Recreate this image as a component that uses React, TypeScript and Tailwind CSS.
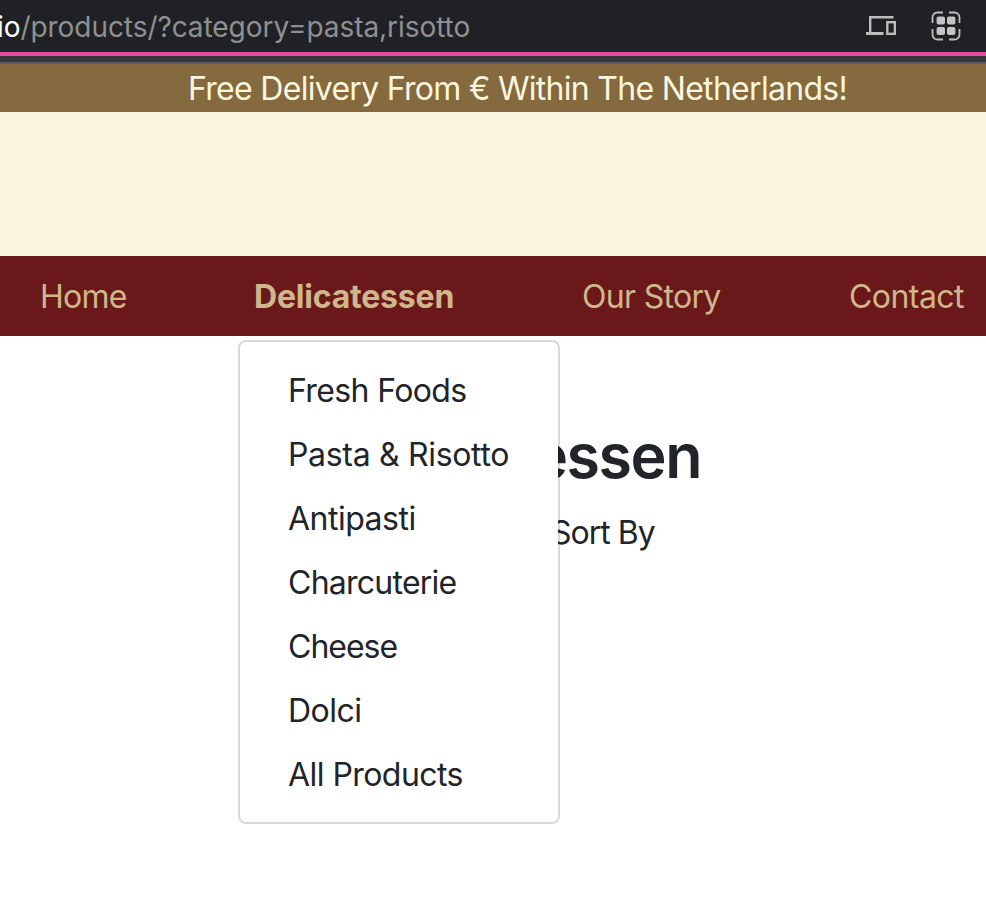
const menuItems = [
  { label: "Fresh Foods", tracking: "tracking-[-0.62px]" },
  { label: "Pasta & Risotto", tracking: "tracking-[-0.32px]" },
  { label: "Antipasti", tracking: "tracking-[-0.5px]" },
  { label: "Charcuterie", tracking: "tracking-[-0.75px]" },
  { label: "Cheese", tracking: "tracking-[-1px]" },
  { label: "Dolci", tracking: "tracking-[-0.5px]" },
  { label: "All Products", tracking: "tracking-[-0.55px]" },
];

function DevicesIcon() {
  return (
    <svg width="30" height="20" viewBox="0 0 30 20" fill="none" stroke="#bdbdbd" strokeWidth="2.4">
      <path d="M27.5 1.2H4.2V16" />
      <path d="M0 17.5H17.5" strokeWidth="3" />
      <rect x="21.3" y="6.2" width="7.6" height="11.6" />
    </svg>
  );
}

function GridIcon() {
  return (
    <svg width="30" height="30" viewBox="0 0 30 30" fill="none">
      <path
        d="M1.5 12V6.5a5 5 0 0 1 5-5H12M18 1.5h5.500a5 5 0 0 1 5 5V12M28.500 18v5.500a5 5 0 0 1-5 5H18M12 28.500H6.500a5 5 0 0 1-5-5V18"
        stroke="#bdbdbd"
        strokeWidth="1.8"
      />
      <g fill="#c4c4c4">
        <rect x="5.6" y="5.6" width="8.4" height="8" rx="2" />
        <rect x="16" y="5.6" width="8.4" height="8" rx="2" />
        <rect x="5.6" y="16" width="8.4" height="8" rx="2" />
        <rect x="16" y="16" width="8.4" height="8" rx="2" />
      </g>
    </svg>
  );
}

export default function App() {
  return (
    <div className="flex h-[920px] w-[986px] flex-col overflow-hidden bg-white font-['Inter','Liberation_Sans',sans-serif] text-[32px] leading-[48px] whitespace-nowrap text-[#212529]">
      <div className="flex h-[52px] shrink-0 items-center bg-[#202124]">
        <div className="-ml-[3px] w-[869px] pt-px text-[28px] tracking-[-0.06px] text-[#8f9092]">
          <span className="text-white">io</span>/products/?category=pasta,risotto
        </div>
        <DevicesIcon />
        <div className="ml-[35px]">
          <GridIcon />
        </div>
      </div>
      <div className="h-1 shrink-0 bg-[#e54b9f]" />
      <div className="h-1.5 shrink-0 bg-[#35363a]" />
      <div className="h-0.5 shrink-0 bg-[#5c5d61]" />

      <div className="h-12 shrink-0 bg-[#85693f] pt-px pl-[188px] tracking-[-0.7px] text-[#fdf6de]">
        Free Delivery From € Within The Netherlands!
      </div>
      <header className="h-36 shrink-0 bg-[#fdf6de]" />

      <nav className="flex h-20 shrink-0 items-center bg-[#6b181a] pt-0.5 pl-10 text-[#cfb78b]">
        <a className="w-[214px] tracking-[-0.75px]">Home</a>
        <div className="relative w-[328px]">
          <a className="font-bold tracking-[-0.2px]">Delicatessen</a>
          <ul className="absolute top-[67px] -left-[16px] z-10 h-[484px] w-[322px] rounded-lg border-2 border-black/15 bg-white bg-clip-padding py-[17px] text-[#212529]">
            {menuItems.map((item) => (
              <li key={item.label} className={`h-16 py-2 pl-12 ${item.tracking}`}>
                {item.label}
              </li>
            ))}
          </ul>
        </div>
        <a className="w-[267px] tracking-[-0.7px]">Our Story</a>
        <a className="tracking-[-0.55px]">Contact</a>
      </nav>

      <main className="flex flex-col pt-[82px]">
        <h1 className="w-[701px] text-right text-[61px] leading-[77px] font-semibold tracking-[-1.5px]">
          Delicatessen
        </h1>
        <p className="mt-[14px] pl-[551px] tracking-[-1px]">Sort By</p>
      </main>
    </div>
  );
}
